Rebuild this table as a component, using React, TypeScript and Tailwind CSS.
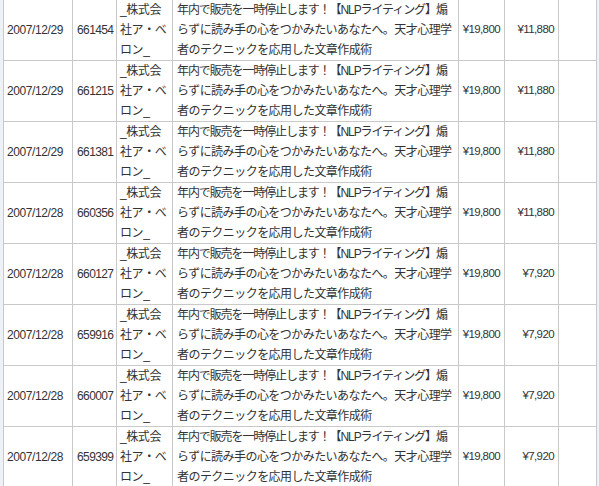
const rows = [
  { date: '2007/12/29', id: '661454', amount: '¥11,880' },
  { date: '2007/12/29', id: '661215', amount: '¥11,880' },
  { date: '2007/12/29', id: '661381', amount: '¥11,880' },
  { date: '2007/12/28', id: '660356', amount: '¥11,880' },
  { date: '2007/12/28', id: '660127', amount: '¥7,920' },
  { date: '2007/12/28', id: '659916', amount: '¥7,920' },
  { date: '2007/12/28', id: '660007', amount: '¥7,920' },
  { date: '2007/12/28', id: '659399', amount: '¥7,920' },
];

const companyLines = ['_株式会', '社ア・ベ', 'ロン_'];

const font = { fontFamily: '"Liberation Sans", "Noto Sans CJK JP", sans-serif' };

function Row({ date, id, amount }: { date: string; id: string; amount: string }) {
  return (
    <div className="flex h-[61px] border-b border-[#c9c9c9]">
      {/* date */}
      <div className="flex w-[69px] shrink-0 items-center border-l border-[#c9c9c9] pl-[3px] text-[12px] tracking-[-0.4px]">
        {date}
      </div>
      {/* id */}
      <div className="flex w-[44px] shrink-0 items-center border-l border-[#c9c9c9] pl-[4px] text-[12px] tracking-[-0.6px]">
        {id}
      </div>
      {/* company */}
      <div className="flex w-[56px] shrink-0 flex-col border-l border-[#c9c9c9] pl-[3px] text-[12px] leading-[20px] tracking-[-0.4px]">
        {companyLines.map((l) => (
          <span key={l} className="whitespace-nowrap">{l}</span>
        ))}
      </div>
      {/* title */}
      <div className="flex w-[286px] shrink-0 flex-col overflow-hidden border-l border-[#c9c9c9] pl-[4px] text-[12px] leading-[20px]">
        <span className="whitespace-nowrap tracking-[-1.1px]">年内で販売を一時停止します！【NLPライティング】煽</span>
        <span className="whitespace-nowrap tracking-[-0.55px]">らずに読み手の心をつかみたいあなたへ。天才心理学</span>
        <span className="whitespace-nowrap tracking-[-0.55px]">者のテクニックを応用した文章作成術</span>
      </div>
      {/* price */}
      <div className="flex w-[46px] shrink-0 items-center justify-end border-l border-[#c9c9c9] pr-[4px] text-[11.5px] tracking-[-0.6px]">
        ¥19,800
      </div>
      {/* amount */}
      <div className="flex w-[54px] shrink-0 items-center justify-end border-l border-[#c9c9c9] pr-[4px] text-[11.5px] tracking-[-0.6px]">
        {amount}
      </div>
      <div className="w-[39px] shrink-0 border-x border-[#c9c9c9]" />
    </div>
  );
}

export default function App() {
  return (
    <div className="flex h-[486px] w-[599px] overflow-hidden bg-[#eef1f5] text-[#333333]" style={font}>
      <div className="ml-[3px] flex flex-col bg-white">
        {rows.map((r) => (
          <Row key={r.id} {...r} />
        ))}
      </div>
    </div>
  );
}
